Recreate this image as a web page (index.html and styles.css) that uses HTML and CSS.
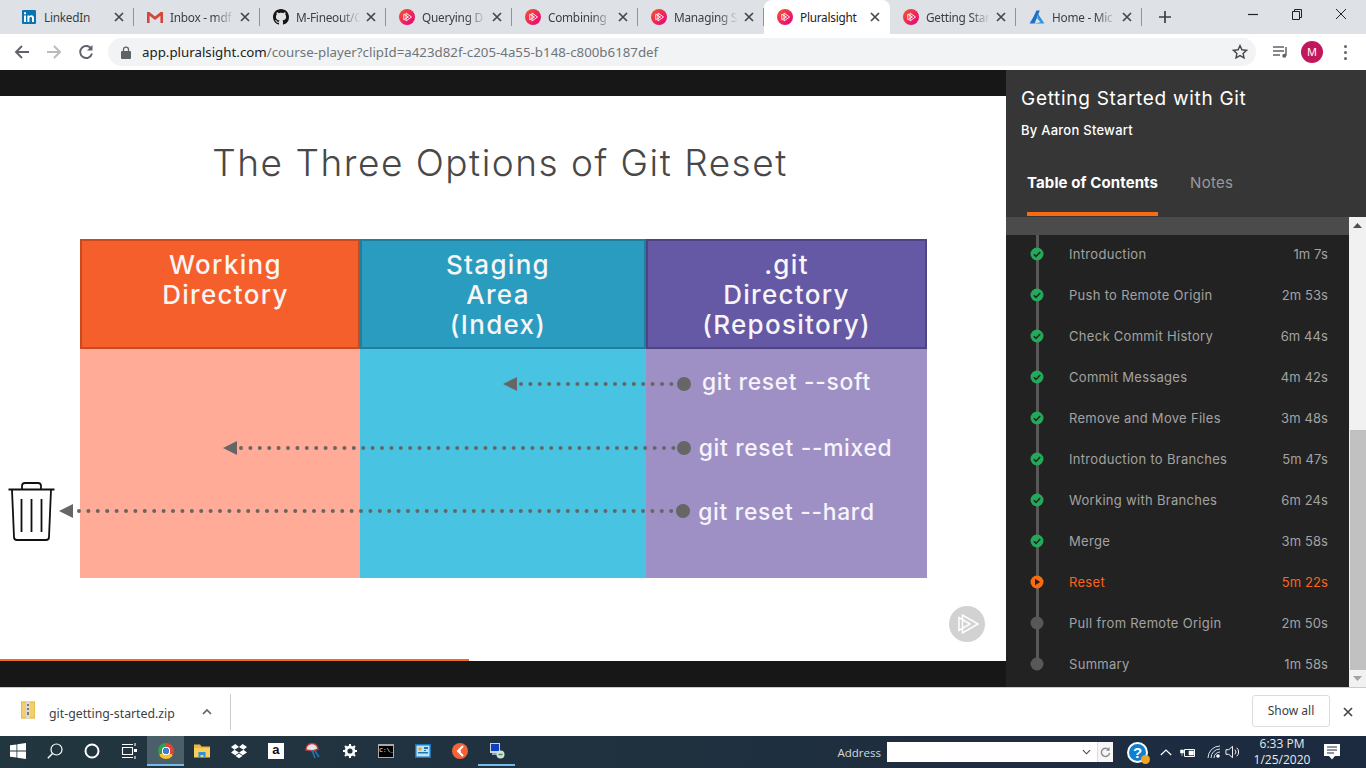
FILE: index.html
```html
<!DOCTYPE html>
<html lang="en">
<head>
    <meta charset="UTF-8">
    <title>Pluralsight</title>
    <link rel="stylesheet" href="styles.css">
</head>
<body>
    <svg class="defs" width="0" height="0">
        <defs>
            <linearGradient id="psGrad" x1="0" y1="0" x2="1" y2="1">
                <stop offset="0" stop-color="#f8552a"/>
                <stop offset="1" stop-color="#e4007f"/>
            </linearGradient>
            <symbol id="ps" viewBox="0 0 16 16">
                <circle cx="8" cy="8" r="8" fill="url(#psGrad)"/>
                <path d="M4.800 5.200v5.600L9.500 8zM7 4v8l5.500-4z" fill="none" stroke="#fff" stroke-width=".9"/>
            </symbol>
            <symbol id="x" viewBox="0 0 10 10">
                <path d="M1 1l8 8M9 1l-8 8" fill="none" stroke="#45474a" stroke-width="1.7"/>
            </symbol>
            <symbol id="check" viewBox="0 0 14 14">
                <circle cx="7" cy="7" r="6.5" fill="#23a95a"/>
                <path d="M3.800 7.200l2.200 2.200 4.200-4.400" fill="none" stroke="#222" stroke-width="1.500"/>
            </symbol>
        </defs>
    </svg>

    <!-- chrome tabs -->
    <div class="tabbar">
        <div class="tab">
            <svg class="favicon" viewBox="0 0 16 16"><rect x="1" y="1" width="14" height="14" rx="1" fill="#0a74b3"/><path d="M3 6.400h2V13H3zM3 3.200h2v2H3zM6.400 6.400h1.900v.9c.4-.7 1.100-1.100 2-1.100 1.800 0 2.700 1.100 2.700 3V13h-2V9.600c0-.9-.3-1.600-1.200-1.600s-1.400.7-1.400 1.600V13h-2z" fill="#fff"/></svg>
            <span class="tab-title tab-full">LinkedIn</span>
            <svg class="tab-x"><use href="#x"/></svg>
        </div>
        <div class="tab">
            <svg class="favicon" viewBox="0 0 16 16"><path d="M0 3h2.400L8 7.600 13.600 3H16v11h-2.600V6.800L8 11 2.600 6.800V14H0z" fill="#d44638"/></svg>
            <span class="tab-title">Inbox - mdf</span>
            <svg class="tab-x"><use href="#x"/></svg>
        </div>
        <div class="tab">
            <svg class="favicon" viewBox="0 0 16 16"><path fill="#161514" d="M8 0C3.58 0 0 3.58 0 8c0 3.54 2.29 6.53 5.47 7.59.4.07.55-.17.55-.38 0-.19-.01-.82-.01-1.49-2.01.37-2.53-.49-2.69-.94-.09-.23-.48-.94-.82-1.13-.28-.15-.68-.52-.01-.53.63-.01 1.08.58 1.23.82.72 1.21 1.87.87 2.33.66.07-.52.28-.87.51-1.07-1.78-.2-3.64-.89-3.64-3.95 0-.87.31-1.59.82-2.15-.08-.2-.36-1.02.08-2.12 0 0 .67-.21 2.2.82.64-.18 1.32-.27 2-.27.68 0 1.36.09 2 .27 1.53-1.04 2.2-.82 2.2-.82.44 1.1.16 1.92.08 2.12.51.56.82 1.27.82 2.15 0 3.07-1.87 3.75-3.65 3.95.29.25.54.73.54 1.48 0 1.07-.01 1.93-.01 2.2 0 .21.15.46.55.38A8.013 8.013 0 0016 8c0-4.42-3.58-8-8-8z"/></svg>
            <span class="tab-title">M-Fineout/G</span>
            <svg class="tab-x"><use href="#x"/></svg>
        </div>
        <div class="tab">
            <svg class="favicon"><use href="#ps"/></svg>
            <span class="tab-title">Querying D</span>
            <svg class="tab-x"><use href="#x"/></svg>
        </div>
        <div class="tab">
            <svg class="favicon"><use href="#ps"/></svg>
            <span class="tab-title">Combining</span>
            <svg class="tab-x"><use href="#x"/></svg>
        </div>
        <div class="tab">
            <svg class="favicon"><use href="#ps"/></svg>
            <span class="tab-title">Managing S</span>
            <svg class="tab-x"><use href="#x"/></svg>
        </div>
        <div class="tab tab-active">
            <svg class="favicon"><use href="#ps"/></svg>
            <span class="tab-title tab-full">Pluralsight</span>
            <svg class="tab-x"><use href="#x"/></svg>
        </div>
        <div class="tab">
            <svg class="favicon"><use href="#ps"/></svg>
            <span class="tab-title">Getting Star</span>
            <svg class="tab-x"><use href="#x"/></svg>
        </div>
        <div class="tab">
            <svg class="favicon" viewBox="0 0 16 16"><path d="M7.400 1.500h3.400L5.600 14.500H.6l4.200-7.200z" fill="#1f6fc4"/><path d="M9.200 5l6.200 9.500H5l6.600-1.200-3.400-4z" fill="#2f93e0"/></svg>
            <span class="tab-title">Home - Mic</span>
            <svg class="tab-x"><use href="#x"/></svg>
        </div>
        <svg class="new-tab" viewBox="0 0 12 12"><path d="M6 0v12M0 6h12" fill="none" stroke="#3c4043" stroke-width="1.700"/></svg>
        <div class="win-controls">
            <svg viewBox="0 0 12 12"><path d="M1 6.500h10" stroke="#222" stroke-width="1.200"/></svg>
            <svg viewBox="0 0 12 12"><path d="M1.500 3.500h7v8h-7zM3.500 3.500v-2h7v8h-2" fill="none" stroke="#222"/></svg>
            <svg viewBox="0 0 12 12"><path d="M1 1l10 10M11 1L1 11" stroke="#222"/></svg>
        </div>
    </div>

    <!-- chrome toolbar -->
    <div class="toolbar">
        <svg class="nav-btn" viewBox="0 0 16 16"><path d="M15 8H2M8 2L2 8l6 6" fill="none" stroke="#5f6368" stroke-width="1.900"/></svg>
        <svg class="nav-btn" viewBox="0 0 16 16"><path d="M1 8h13M8 2l6 6-6 6" fill="none" stroke="#b8babd" stroke-width="1.900"/></svg>
        <svg class="nav-btn" viewBox="0 0 16 16"><path d="M13.400 5A6 6 0 1 0 14 9.500" fill="none" stroke="#5f6368" stroke-width="1.900"/><path d="M14.500 1v5.400H9z" fill="#5f6368"/></svg>
        <div class="omnibox">
            <svg class="lock" viewBox="0 0 10 13"><path d="M2.500 5V3.600a2.500 2.500 0 0 1 5 0V5" fill="none" stroke="#5f6368" stroke-width="1.300"/><rect y="5" width="10" height="8" rx="1" fill="#5f6368"/></svg>
            <span class="url"><span class="url-host">app.pluralsight.com</span>/course-player?clipId=a423d82f-c205-4a55-b148-c800b6187def</span>
            <svg class="star" viewBox="0 0 16 16"><path d="M8 1.600l1.900 4.200 4.600.5-3.400 3.100.9 4.500L8 11.600l-4 2.300.9-4.500L1.500 6.300l4.600-.5z" fill="none" stroke="#45474a" stroke-width="1.400"/></svg>
        </div>
        <svg class="media" viewBox="0 0 16 14"><path d="M0 2h11M0 6h11M0 10h7" stroke="#5f6368" stroke-width="1.500"/><path d="M13 2v8.500" stroke="#5f6368" stroke-width="1.500"/><circle cx="11.300" cy="10.800" r="2" fill="#5f6368"/></svg>
        <div class="avatar">M</div>
        <div class="kebab"><i></i><i></i><i></i></div>
    </div>

    <div class="player">
        <div class="video">
            <div class="video-bar"></div>
            <div class="slide">
                <h1 class="slide-title">The Three Options of Git Reset</h1>
                <div class="areas">
                    <div class="area-head head-work">Working<br>Directory</div>
                    <div class="area-head head-stage">Staging<br>Area<br>(Index)</div>
                    <div class="area-head head-git">.git<br>Directory<br>(Repository)</div>
                    <div class="area-body body-work"></div>
                    <div class="area-body body-stage"></div>
                    <div class="area-body body-git">
                        <div class="cmd">git reset --soft</div>
                        <div class="cmd cmd-mixed">git reset --mixed</div>
                        <div class="cmd">git reset --hard</div>
                    </div>
                </div>
                <!-- arrows and bin lie over the table -->
                <svg class="arrows" width="1006" height="565" viewBox="0 96 1006 565">
                    <g fill="none" stroke="#666" stroke-width="4" stroke-linecap="round" stroke-dasharray="0 9.400">
                        <path d="M521 384H676"/>
                        <path d="M241 448H676"/>
                        <path d="M79 511H675"/>
                    </g>
                    <g fill="#666">
                        <circle cx="684" cy="384" r="7"/>
                        <circle cx="684" cy="448" r="7"/>
                        <circle cx="683" cy="511" r="7"/>
                        <path d="M517 377v14l-14-7z"/>
                        <path d="M237 441v14l-14-7z"/>
                        <path d="M73 504v14l-14-7z"/>
                    </g>
                    <g fill="none" stroke="#111" stroke-width="1.800">
                        <path d="M8.500 489.500h46M22 488.500v-2.500a3 3 0 0 1 3-3h13a3 3 0 0 1 3 3v2.500"/>
                        <path d="M12 490l2 47a3 3 0 0 0 3 3h29a3 3 0 0 0 3-3l2-47"/>
                        <path d="M21.500 499v33M31.500 499v33M41.500 499v33"/>
                    </g>
                </svg>
                <svg class="watermark" viewBox="0 0 36 36">
                    <circle cx="18" cy="18" r="18" fill="#d2d2d2"/>
                    <path d="M10 11.500v13L21 18zM13.500 9v18L29 18z" fill="none" stroke="#fff" stroke-width="1.500"/>
                </svg>
                <div class="progress"></div>
            </div>
            <div class="video-bar"></div>
        </div>

        <aside class="sidebar">
            <div class="course-head">
                <div class="course-title">Getting Started with Git</div>
                <div class="course-author">By Aaron Stewart</div>
                <div class="side-tabs">
                    <div class="side-tab side-tab-on">Table of Contents</div>
                    <div class="side-tab">Notes</div>
                </div>
            </div>
            <div class="toc-wrap">
                <div class="toc">
                    <div class="toc-strip"></div>
                    <div class="toc-list">
                        <div class="clip"><svg class="dot"><use href="#check"/></svg><span class="clip-name">Introduction</span><span>1m 7s</span></div>
                        <div class="clip"><svg class="dot"><use href="#check"/></svg><span class="clip-name">Push to Remote Origin</span><span>2m 53s</span></div>
                        <div class="clip"><svg class="dot"><use href="#check"/></svg><span class="clip-name">Check Commit History</span><span>6m 44s</span></div>
                        <div class="clip"><svg class="dot"><use href="#check"/></svg><span class="clip-name">Commit Messages</span><span>4m 42s</span></div>
                        <div class="clip"><svg class="dot"><use href="#check"/></svg><span class="clip-name">Remove and Move Files</span><span>3m 48s</span></div>
                        <div class="clip"><svg class="dot"><use href="#check"/></svg><span class="clip-name">Introduction to Branches</span><span>5m 47s</span></div>
                        <div class="clip"><svg class="dot"><use href="#check"/></svg><span class="clip-name">Working with Branches</span><span>6m 24s</span></div>
                        <div class="clip"><svg class="dot"><use href="#check"/></svg><span class="clip-name">Merge</span><span>3m 58s</span></div>
                        <div class="clip clip-now">
                            <svg class="dot" viewBox="0 0 14 14"><circle cx="7" cy="7" r="6.500" fill="#f96b13"/><path d="M5 3.800v6.400L10.200 7z" fill="#222"/></svg>
                            <span class="clip-name">Reset</span><span>5m 22s</span>
                        </div>
                        <div class="clip"><svg class="dot" viewBox="0 0 14 14"><circle cx="7" cy="7" r="6.500" fill="#585858"/></svg><span class="clip-name">Pull from Remote Origin</span><span>2m 50s</span></div>
                        <div class="clip"><svg class="dot" viewBox="0 0 14 14"><circle cx="7" cy="7" r="6.500" fill="#585858"/></svg><span class="clip-name">Summary</span><span>1m 58s</span></div>
                    </div>
                </div>
                <div class="scrollbar">
                    <svg class="scroll-arrow" viewBox="0 0 9 5"><path d="M4.500 0L9 5H0z" fill="#505050"/></svg>
                    <div class="scroll-track"><div class="scroll-thumb"></div></div>
                    <svg class="scroll-arrow" viewBox="0 0 9 5"><path d="M0 0h9L4.500 5z" fill="#a3a3a3"/></svg>
                </div>
            </div>
        </aside>
    </div>

    <!-- download shelf -->
    <div class="shelf">
        <svg class="zip" viewBox="0 0 14 18"><path d="M0 1h14v16H0z" fill="#f3cf6b" stroke="#e0b02f"/><path d="M5 1h4v16H5z" fill="#d9dadb"/><path d="M6 3h2v2H6zM6 7h2v2H6zM6 11h2v3H6z" fill="#777"/></svg>
        <span class="zip-name">git-getting-started.zip</span>
        <svg class="zip-caret" viewBox="0 0 10 6"><path d="M1 5l4-4 4 4" fill="none" stroke="#5f6368" stroke-width="1.700"/></svg>
        <div class="shelf-sep"></div>
        <div class="shelf-space"></div>
        <div class="show-all">Show all</div>
        <svg class="shelf-x" viewBox="0 0 10 10"><use href="#x"/></svg>
    </div>

    <!-- windows taskbar -->
    <div class="taskbar">
        <div class="task"><svg class="task-ico" viewBox="0 0 16 16"><path d="M0 2.300l6.500-.9v6.200H0zM7.300 1.300L16 0v7.600H7.300zM0 8.400h6.500v6.200L0 13.700zM7.300 8.400H16V16l-8.700-1.200z" fill="#fff"/></svg></div>
        <div class="task"><svg class="task-ico" viewBox="0 0 16 16"><circle cx="9.500" cy="6.500" r="5.500" fill="none" stroke="#fff" stroke-width="1.200"/><path d="M5.500 10.500L.8 15.200" stroke="#fff" stroke-width="1.400"/></svg></div>
        <div class="task"><svg class="task-ico" viewBox="0 0 16 16"><circle cx="8" cy="8" r="6.500" fill="none" stroke="#fff" stroke-width="2"/></svg></div>
        <div class="task"><svg class="task-ico" viewBox="0 0 16 16"><path d="M1.500 4.500h10v7h-10zM1 1.500h11M1 14.500h11M14 0v3M14 13v3" fill="none" stroke="#fff" stroke-width="1.100"/><path d="M13 6h3v3h-3z" fill="#fff"/></svg></div>
        <div class="task task-open task-active"><div class="chrome-logo"></div></div>
        <div class="task"><svg class="task-ico" viewBox="0 0 16 16"><path d="M0 1.500h6l1.500 2H16v3H0z" fill="#f2b53a"/><path d="M0 5h16v9.500H0z" fill="#f7cf5a"/><path d="M4.500 9h7v5.500h-2v-2.500h-3v2.500h-2z" fill="#2f8fd8"/></svg></div>
        <div class="task"><svg class="task-ico" viewBox="0 0 16 16"><path d="M4.300 1L0 4l3.500 2.700L8 4zM11.700 1L16 4l-3.500 2.700L8 4zM3.500 6.700L0 9.500l4.300 2.800L8 9.500zM12.500 6.700L16 9.500l-4.300 2.800L8 9.500zM4.500 13l3.500 2.300 3.500-2.300L8 10.500z" fill="#fff"/></svg></div>
        <div class="task"><div class="amazon">a</div></div>
        <div class="task"><svg class="task-ico" viewBox="0 0 16 16"><path d="M1 7a6 6 0 0 1 12-1L8 8z" fill="#e4e4e4" stroke="#c23b3b" stroke-width="1.400"/><path d="M7 7l3 8M10 8l4 6" stroke="#1d79b8" stroke-width="1.600"/></svg></div>
        <div class="task"><svg class="task-ico" viewBox="0 0 16 16"><circle cx="8" cy="8" r="4" fill="none" stroke="#fff" stroke-width="2.800"/><path d="M8 1v3M8 12v3M1 8h3M12 8h3M3 3l2 2M11 11l2 2M13 3l-2 2M5 11l-2 2" stroke="#fff" stroke-width="2"/></svg></div>
        <div class="task"><div class="cmd-ico">C:\_</div></div>
        <div class="task"><svg class="task-ico" viewBox="0 0 16 14"><rect width="16" height="14" fill="#1b75ba"/><rect x="1.500" y="1.500" width="13" height="11" fill="#bfe3f4"/><circle cx="5" cy="5" r="1.800" fill="#f0a52a"/><path d="M9 3h4v2H9zM3 8h10v1.500H3zM9 6h2v1H9z" fill="#1b75ba"/></svg></div>
        <div class="task"><svg class="task-ico" viewBox="0 0 16 16"><circle cx="8" cy="8" r="8" fill="#f5623a"/><path d="M11 3L6 8l5 5" fill="none" stroke="#fff" stroke-width="2"/><circle cx="8" cy="8" r="1" fill="#fff"/></svg></div>
        <div class="task task-open"><svg class="task-ico" viewBox="0 0 16 16"><rect x="1" y="0" width="10" height="10" fill="#c9d3d9"/><rect x="2" y="1" width="8" height="7" fill="#0b3fc4"/><path d="M3 10h6v2H3z" fill="#9aa5ab"/><circle cx="11.500" cy="11.500" r="4" fill="#d7dcdf"/><path d="M9.500 11.500h4" stroke="#2a9d46" stroke-width="1.500"/></svg></div>

        <div class="task-space"></div>

        <span class="addr-label">Address</span>
        <div class="addr-box">
            <span class="addr-input"></span>
            <svg class="addr-caret" viewBox="0 0 10 6"><path d="M1 1l4 4 4-4" fill="none" stroke="#444" stroke-width="1.200"/></svg>
            <div class="addr-go"><svg viewBox="0 0 12 12"><path d="M9.500 3A4.500 4.500 0 1 0 10.500 6.500" fill="none" stroke="#8b8b8b" stroke-width="1.500"/><path d="M10.500 0v4h-4z" fill="#8b8b8b"/></svg></div>
        </div>
        <div class="tray">
            <div class="help">?<i class="help-badge"></i></div>
            <svg class="tray-ico" viewBox="0 0 12 7"><path d="M.8 6L6 1l5.200 5" fill="none" stroke="#fff" stroke-width="1.200"/></svg>
            <svg class="tray-ico tray-batt" viewBox="0 0 16 11"><path d="M4.500 2.500h10v7h-10z" fill="none" stroke="#fff"/><path d="M9 4h4.500v4H9zM.5 3h3v3h-3zM2 6v3" fill="#fff" stroke="#fff" stroke-width=".6"/></svg>
            <svg class="tray-ico tray-wifi" viewBox="0 0 14 14"><path d="M1 13A12 12 0 0 1 13 1M4 13a9 9 0 0 1 9-9M7 13a6 6 0 0 1 6-6" fill="none" stroke="#dfe3e7" stroke-width="1"/><circle cx="11" cy="11" r="1.800" fill="#fff"/></svg>
            <svg class="tray-ico tray-vol" viewBox="0 0 16 14"><path d="M1 4.500h3l4-3.500v12L4 9.500H1z" fill="none" stroke="#fff"/><path d="M10.500 4.500a3.500 3.500 0 0 1 0 5M12.500 2.500a6 6 0 0 1 0 9" fill="none" stroke="#fff"/></svg>
            <div class="clock"><div>6:33 PM</div><div>1/25/2020</div></div>
            <svg class="notif" viewBox="0 0 16 16"><path d="M0 0h16v12h-5l-3 3.500L5 12H0z" fill="#fff"/><path d="M3 3h10M3 6h10M3 9h7" stroke="#1c2a3f"/></svg>
        </div>
    </div>
</body>
</html>
```

FILE: styles.css
```css
* {
    box-sizing: border-box;
}
html, body {
    margin: 0;
    height: 100%;
    overflow: hidden;
}
body {
    width: 1366px;
    height: 768px;
    display: flex;
    flex-direction: column;
    font-family: "Noto Sans", "Open Sans", sans-serif;
    background: #fff;
}
.defs {
    position: absolute;
}

/* tabs */
.tabbar {
    height: 34px;
    flex: none;
    display: flex;
    align-items: center;
    padding-left: 8px;
    background: #dee1e6;
}
.tab {
    position: relative;
    width: 126px;
    height: 34px;
    flex: none;
    display: flex;
    align-items: center;
    padding: 0 10px 0 13px;
    font-size: 11.800px;
    letter-spacing: -.25px;
    color: #3c4043;
}
.tab::after {
    content: "";
    position: absolute;
    right: 0;
    top: 8px;
    height: 18px;
    width: 1px;
    background: #8f9296;
}
.tab-active {
    background: #fff;
    border-radius: 8px 8px 0 0;
    color: #222;
}
.tab-active::after {
    display: none;
}
.favicon {
    width: 16px;
    height: 16px;
    flex: none;
}
.tab-title {
    flex: 1;
    min-width: 0;
    margin-left: 7px;
    white-space: nowrap;
    -webkit-mask-image: linear-gradient(to right, #000 70%, transparent 100%);
    mask-image: linear-gradient(to right, #000 70%, transparent 100%);
}
.tab-full {
    -webkit-mask-image: none;
    mask-image: none;
}
.tab-x {
    width: 10px;
    height: 10px;
    flex: none;
    margin-left: 6px;
}
.new-tab {
    width: 12px;
    height: 12px;
    flex: none;
    margin-left: 17px;
}
.win-controls {
    margin-left: auto;
    display: flex;
    align-self: flex-start;
    padding: 8px 19px 0 0;
    gap: 32px;
}
.win-controls svg {
    width: 12px;
    height: 12px;
}

/* address bar */
.toolbar {
    height: 36px;
    flex: none;
    display: flex;
    align-items: center;
    padding-left: 14px;
    background: #fff;
}
.nav-btn {
    width: 16px;
    height: 16px;
    flex: none;
    margin-right: 16px;
}
.omnibox {
    width: 1148px;
    height: 28px;
    flex: none;
    margin-left: -2px;
    display: flex;
    align-items: center;
    padding: 0 8px 0 13px;
    border-radius: 14px;
    background: #f1f3f4;
}
.lock {
    width: 10px;
    height: 13px;
    flex: none;
}
.url {
    flex: 1;
    margin-left: 11px;
    font-size: 13.300px;
    color: #70757a;
    white-space: nowrap;
}
.url-host {
    color: #202124;
}
.star {
    width: 16px;
    height: 16px;
    flex: none;
}
.media {
    width: 16px;
    height: 14px;
    flex: none;
    margin-left: 17px;
}
.avatar {
    width: 22px;
    height: 22px;
    flex: none;
    margin-left: 12px;
    border-radius: 50%;
    background: #c2185b;
    color: #fff;
    font-size: 11px;
    line-height: 22px;
    text-align: center;
}
.kebab {
    display: flex;
    flex-direction: column;
    gap: 3px;
    margin-left: 21px;
}
.kebab i {
    width: 3px;
    height: 3px;
    border-radius: 50%;
    background: #5f6368;
}

/* player */
.player {
    height: 617px;
    flex: none;
    display: flex;
}
.video {
    width: 1006px;
    flex: none;
    display: flex;
    flex-direction: column;
}
.video-bar {
    height: 26px;
    flex: none;
    background: #171717;
}
.slide {
    position: relative;
    height: 565px;
    flex: none;
    padding: 40px 79px 0 80px;
    background: #fff;
}
.slide-title {
    margin: 0;
    padding-right: 7px;
    font-family: "Inter", sans-serif;
    font-weight: 300;
    font-size: 37px;
    line-height: 54px;
    letter-spacing: 1.500px;
    text-align: center;
    color: #484848;
}
.areas {
    display: grid;
    grid-template-columns: 280px 286px 281px;
    grid-template-rows: 110px 229px;
    margin-top: 49px;
}
.area-head {
    display: flex;
    align-items: flex-start;
    justify-content: center;
    padding-top: 9px;
    border: 2px solid;
    font-family: "Inter", sans-serif;
    font-weight: 500;
    font-size: 26px;
    line-height: 30px;
    letter-spacing: 1.300px;
    text-align: center;
    color: #f7f5f5;
}
.head-work {
    padding-left: 11px;
    background: #f55f2c;
    border-color: #c94a1e;
}
.head-stage {
    padding-right: 10px;
    background: #2a9cbf;
    border-color: #1f7f9f;
}
.head-git {
    background: #6558a5;
    border-color: #4e4484;
}
.body-work {
    background: #ffab97;
}
.body-stage {
    background: #48c4e2;
}
.body-git {
    background: #9e8fc5;
}
.cmd {
    height: 65px;
    font-family: "Inter", sans-serif;
    font-weight: 500;
    font-size: 22.800px;
    line-height: 65px;
    letter-spacing: .7px;
    text-align: center;
    color: #f6f4fa;
}
.cmd-mixed {
    padding: 3px 0 0 18px;
    line-height: 62px;
}
.arrows {
    position: absolute;
    left: 0;
    top: 0;
}
.watermark {
    position: absolute;
    left: 949px;
    top: 510px;
    width: 36px;
    height: 36px;
}
.progress {
    position: absolute;
    left: 0;
    bottom: 0;
    width: 469px;
    height: 2px;
    background: #f26b21;
}

/* sidebar */
.sidebar {
    width: 360px;
    flex: none;
    display: flex;
    flex-direction: column;
    font-family: "Inter", sans-serif;
}
.course-head {
    height: 147px;
    flex: none;
    padding: 16px 0 0 15px;
    background: #363636;
}
.course-title {
    font-size: 19px;
    line-height: 25px;
    letter-spacing: .7px;
    color: #fff;
}
.course-author {
    margin-top: 10px;
    font-size: 13px;
    line-height: 18px;
    font-weight: 500;
    letter-spacing: .25px;
    color: #fff;
}
.side-tabs {
    display: flex;
    gap: 32px;
    margin: 35px 0 0 6px;
}
.side-tab {
    padding-bottom: 20px;
    font-size: 15px;
    line-height: 18px;
    letter-spacing: .3px;
    color: #9a9a9a;
}
.side-tab-on {
    border-bottom: 4px solid #f96b13;
    font-weight: 700;
    letter-spacing: .1px;
    color: #fff;
}
.toc-wrap {
    flex: 1;
    min-height: 0;
    display: flex;
}
.toc {
    flex: 1;
    display: flex;
    flex-direction: column;
    background: #222;
}
.toc-strip {
    height: 18px;
    flex: none;
    background: #4b4b4b;
}
.toc-list {
    position: relative;
    margin-top: -2px;
    padding: 0 21px 0 24px;
}
.toc-list::before {
    content: "";
    position: absolute;
    left: 30px;
    top: 2px;
    width: 3px;
    height: 428px;
    background: #585858;
}
.clip {
    position: relative;
    height: 41px;
    display: flex;
    align-items: center;
    font-size: 13px;
    letter-spacing: .1px;
    color: #a3a3a3;
}
.clip-name {
    flex: 1;
    margin-left: 25px;
    letter-spacing: .3px;
}
.clip-now {
    color: #f9641c;
}
.dot {
    width: 14px;
    height: 14px;
    flex: none;
}
.scrollbar {
    width: 17px;
    flex: none;
    display: flex;
    flex-direction: column;
    background: #f1f1f1;
}
.scroll-arrow {
    width: 9px;
    height: 5px;
    flex: none;
    margin: 6px auto;
}
.scroll-track {
    flex: 1;
    padding-top: 196px;
}
.scroll-thumb {
    height: 240px;
    margin-left: 1px;
    background: #c1c1c1;
}

/* downloads */
.shelf {
    height: 49px;
    flex: none;
    display: flex;
    align-items: center;
    padding: 0 0 0 21px;
    border-top: 1px solid #ccc;
    background: #fff;
    font-size: 12.300px;
    color: #3c4043;
}
.zip {
    width: 14px;
    height: 18px;
    flex: none;
    margin-top: -4px;
}
.zip-name {
    width: 153px;
    margin: 3px 0 0 14px;
    white-space: nowrap;
}
.zip-caret {
    width: 10px;
    height: 6px;
    flex: none;
}
.shelf-sep {
    width: 1px;
    height: 36px;
    margin-left: 18px;
    background: #ccc;
}
.shelf-space {
    flex: 1;
}
.show-all {
    width: 78px;
    height: 32px;
    margin-top: -2px;
    border: 1px solid #dadce0;
    border-radius: 3px;
    font-size: 12px;
    line-height: 30px;
    text-align: center;
    color: #3c4043;
}
.shelf-x {
    width: 10px;
    height: 10px;
    flex: none;
    margin: 0 13px;
}

/* taskbar */
.taskbar {
    height: 32px;
    flex: none;
    display: flex;
    align-items: center;
    background: linear-gradient(to right, #22363f, #1c2a40);
    color: #fff;
}
.task {
    position: relative;
    width: 36.800px;
    height: 30px;
    flex: none;
    align-self: flex-start;
    display: flex;
    align-items: center;
    justify-content: center;
}
.task-active {
    background: #4b5f69;
}
.task-open::after {
    content: "";
    position: absolute;
    left: 0;
    right: 0;
    bottom: 0;
    height: 2px;
    background: #76b9ed;
}
.task-ico {
    width: 16px;
    height: 16px;
}
.chrome-logo {
    width: 16px;
    height: 16px;
    border-radius: 50%;
    background:
        radial-gradient(circle, #3b7ddb 0 3px, #fff 3.200px 4.200px, transparent 4.400px),
        conic-gradient(#e54335 0 120deg, #fbc02d 120deg 240deg, #2fa14f 240deg 360deg);
}
.amazon {
    width: 16px;
    height: 16px;
    background: #fff;
    color: #111;
    font-family: "Liberation Sans", sans-serif;
    font-size: 13px;
    font-weight: 700;
    line-height: 13px;
    text-align: center;
}
.cmd-ico {
    width: 16px;
    height: 14px;
    border: 1px solid #aaa;
    border-top-width: 2px;
    background: #000;
    color: #fff;
    font-family: "Liberation Mono", monospace;
    font-size: 6px;
    line-height: 10px;
    text-align: center;
    overflow: hidden;
}
.task-space {
    flex: 1;
}
.addr-label {
    font-family: "Open Sans", sans-serif;
    font-size: 11.500px;
    color: #d5d9dd;
}
.addr-box {
    width: 226px;
    height: 20px;
    margin: 0 14px 0 6px;
    display: flex;
    align-items: center;
    background: #fff;
}
.addr-input {
    flex: 1;
}
.addr-caret {
    width: 9px;
    height: 6px;
    margin-right: 6px;
}
.addr-go {
    width: 16px;
    height: 20px;
    display: flex;
    align-items: center;
    justify-content: center;
    border-left: 1px solid #ddd;
    background: #f6f6f6;
}
.addr-go svg {
    width: 11px;
    height: 11px;
}
.tray {
    display: flex;
    align-items: center;
}
.help {
    position: relative;
    width: 21px;
    height: 21px;
    border-radius: 50%;
    border: 2px solid #fff;
    background: #0f7fd0;
    color: #fff;
    font-family: "Liberation Sans", sans-serif;
    font-size: 15px;
    font-weight: 700;
    line-height: 17px;
    text-align: center;
}
.help-badge {
    position: absolute;
    right: -4px;
    bottom: -3px;
    width: 9px;
    height: 9px;
    border-radius: 50%;
    background: #f0a52a;
}
.tray-ico {
    width: 12px;
    height: 7px;
    margin-left: 12px;
}
.tray-batt {
    width: 16px;
    height: 11px;
    margin-left: 8px;
}
.tray-wifi {
    width: 14px;
    height: 14px;
    margin-left: 11px;
}
.tray-vol {
    width: 15px;
    height: 14px;
    margin-left: 4px;
}
.clock {
    width: 60px;
    margin-left: 12px;
    font-family: "Open Sans", sans-serif;
    font-size: 12px;
    line-height: 16px;
    text-align: center;
    color: #e8eaec;
}
.notif {
    width: 16px;
    height: 16px;
    margin: 0 26px 0 12px;
}
```
